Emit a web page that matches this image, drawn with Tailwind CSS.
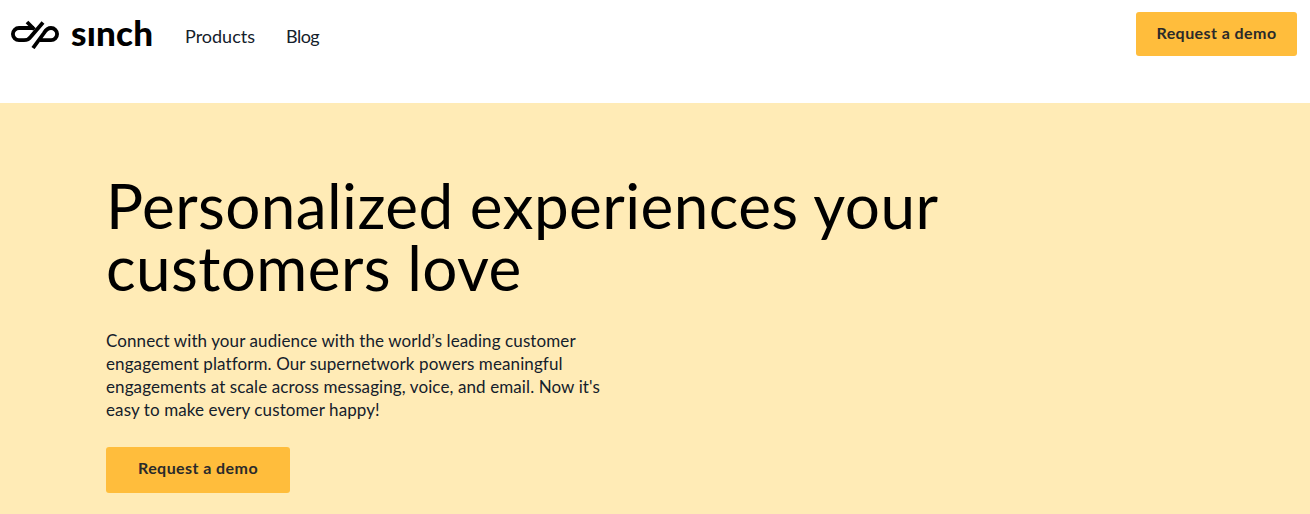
<!DOCTYPE html>
<html lang="en">
<head>
<meta charset="utf-8">
<title>Sinch</title>
<script src="https://cdn.jsdelivr.net/npm/@tailwindcss/browser@4"></script>
</head>
<body class="bg-white font-['Lato',sans-serif] overflow-hidden">
<div class="w-[1310px] h-[514px] flex flex-col overflow-hidden">
  <header class="h-[103px] shrink-0 flex items-start justify-between pl-[11px] pr-[13px] bg-white">
    <div class="flex items-center h-[68px]">
      <a class="flex items-center gap-[12px] w-[174px] text-black" href="#">
        <svg class="w-[48px] h-[29px] shrink-0" viewBox="11 20 48 29" fill="none" stroke="#000" stroke-width="3.8">
          <path d="M43 22.5 L31 36.5 Q28.5 40.2 24 40.2 H19 A6.1 6.1 0 0 1 19 28 H34"/>
          <path d="M27 22 L34.5 29.5"/>
          <path d="M33 48 L44 33 Q47 28 51 28 A6.1 6.1 0 0 1 51 40.2 H40"/>
        </svg>
        <span class="font-black text-[35px] leading-none tracking-[0.2px] -mt-[4px]">sınch</span>
      </a>
      <nav class="flex items-center gap-[31px] text-[18px] text-[#14202b] mt-[5px]">
        <a href="#">Products</a>
        <a href="#" class="tracking-[-0.5px]">Blog</a>
      </nav>
    </div>
    <a href="#" class="mt-[12px] w-[161px] h-[44px] flex items-center justify-center rounded-[3px] bg-[#ffbd3c] text-[16px] font-bold tracking-[0.43px] text-[#2a2a2a] pb-[2px]">Request a demo</a>
  </header>
  <main class="flex-1 bg-[#ffebb6] pl-[106px] pt-[71px]">
    <h1 class="text-[62px] leading-[62px] font-normal tracking-[0.42px] text-black w-[900px]">Personalized experiences your customers love</h1>
    <p class="mt-[31px] w-[510px] text-[17px] leading-[23px] tracking-[0.1px] text-[#14202b]">Connect with your audience with the world’s leading customer engagement platform. Our supernetwork powers meaningful engagements at scale across messaging, voice, and email. Now it's easy to make every customer happy!</p>
    <a href="#" class="mt-[26px] w-[184px] h-[46px] flex items-center justify-center rounded-[3px] bg-[#ffbd3c] text-[16px] font-bold tracking-[0.43px] text-[#2a2a2a] pb-[4px]">Request a demo</a>
  </main>
</div>
</body>
</html>
